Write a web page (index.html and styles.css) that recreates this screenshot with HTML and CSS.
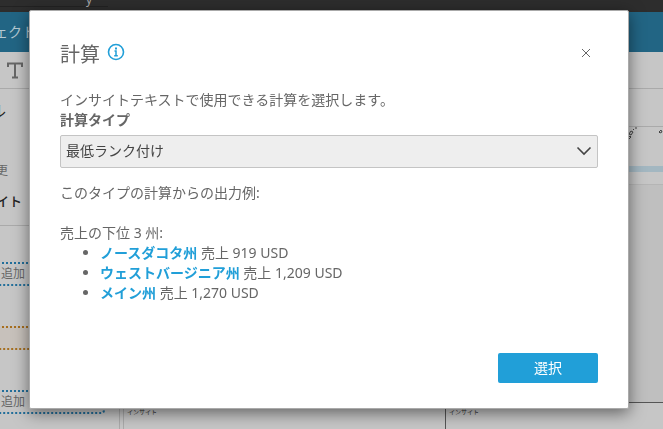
FILE: index.html
```html
<!DOCTYPE html>
<html lang="ja">
<head>
    <meta charset="UTF-8">
    <meta name="viewport" content="width=device-width, initial-scale=1.0">
    <title>計算</title>
    <link rel="stylesheet" href="styles.css">
</head>
<body>
    <div class="app">
        <div class="browser-bar"><span class="tab">y</span></div>
        <div class="nav">ェクト</div>
        <div class="toolbar">
            <svg width="16" height="17" viewBox="0 0 16 17" fill="none" stroke="#666" stroke-width="2">
                <path d="M1 5V1.500H15V5M8 1.500V15.500M5 15.500H11"/>
            </svg>
        </div>
        <div class="workspace">
            <div class="sidebar">
                <div class="sidebar-head">
                    <div class="title">ル</div>
                    <div class="change">更</div>
                    <div class="subtitle">イト</div>
                </div>
                <div class="wells">
                    <div class="well">追加</div>
                    <div class="well orange"></div>
                    <div class="well">追加</div>
                </div>
            </div>
            <div class="canvas">
                <div class="chart-head"></div>
                <div class="chart">
                    <svg width="40" height="14" viewBox="0 0 40 14" fill="none" stroke="#444" stroke-width="1">
                        <path d="M5 11l2-2 1 1-2 2zM6 7l2-3 2 1-2 3zM10 3l1-1M12 1h2M36 5l2-2 1 2-2 1z"/>
                    </svg>
                    <div class="scroll"></div>
                </div>
                <div class="space"></div>
                <div class="cards">
                    <div class="card">インサイト</div>
                    <div class="card active">インサイト</div>
                </div>
            </div>
        </div>
    </div>

    <div class="overlay">
        <div class="modal" role="dialog" aria-labelledby="modalTitle">
            <div class="modal-header">
                <h1 id="modalTitle">計算</h1>
                <button class="info" aria-label="情報">
                    <svg width="18" height="18" viewBox="0 0 18 18" fill="none" stroke="#219fd8">
                        <circle cx="9" cy="9" r="7.500" stroke-width="1.600"/>
                        <path d="M9 4.500v2" stroke-width="2"/>
                        <path d="M7.500 8H9v4.500M7.200 12.700h3.600" stroke-width="1.500"/>
                    </svg>
                </button>
                <button class="close" aria-label="閉じる">
                    <svg width="10" height="10" viewBox="0 0 10 10" stroke="#666" stroke-width="1">
                        <path d="M1 1l8 8M9 1L1 9"/>
                    </svg>
                </button>
            </div>
            <p>インサイトテキストで使用できる計算を選択します。</p>
            <label for="calcType">計算タイプ</label>
            <div class="select-box">
                <select id="calcType">
                    <option>最低ランク付け</option>
                </select>
                <svg width="16" height="10" viewBox="0 0 16 10" fill="none" stroke="#444" stroke-width="1.600">
                    <path d="M1.500 1.500L8 8l6.500-6.500"/>
                </svg>
            </div>
            <p class="example">このタイプの計算からの出力例:</p>
            <p>売上の下位 3 州:</p>
            <ul>
                <li><strong>ノースダコタ州</strong> 売上 919 USD</li>
                <li><strong>ウェストバージニア州</strong> 売上 1,209 USD</li>
                <li><strong>メイン州</strong> 売上 1,270 USD</li>
            </ul>
            <div class="modal-footer">
                <button class="primary">選択</button>
            </div>
        </div>
    </div>
</body>
</html>
```

FILE: styles.css
```css
* {
    box-sizing: border-box;
}
body {
    margin: 0;
    overflow: hidden;
    font-family: "Noto Sans", "Noto Sans CJK JP", sans-serif;
    font-size: 14px;
    line-height: 20px;
    color: #666;
}
h1, p, ul {
    margin: 0;
}
svg {
    display: block;
}

/* page behind the dialog */
.app {
    display: flex;
    flex-direction: column;
    min-height: 100vh;
    margin-left: -10px;
    background-color: #c6c6c6;
}
.browser-bar {
    height: 12px;
    background-color: #2d2d2d;
}
.tab {
    display: block;
    width: 118px;
    height: 7px;
    padding-right: 16px;
    border-bottom: 1px solid #222;
    color: #aaa;
    font-size: 12px;
    line-height: 0;
    text-align: right;
}
.nav {
    padding: 10px 4px;
    background-color: #226584;
    color: #b5c9d2;
}
.toolbar {
    height: 37px;
    padding: 10px 17px;
    border-bottom: 1px solid #aaa;
}
.workspace {
    display: flex;
    flex: 1;
}
.sidebar {
    width: 130px;
    border-right: 1px solid #aaa;
}
.sidebar-head {
    height: 137px;
    padding-top: 12px;
    border-bottom: 1px solid #aaa;
    color: #222;
}
.title {
    font-size: 16px;
}
.change {
    padding: 40px 6px 10px;
    color: #666;
    font-size: 12px;
}
.subtitle {
    padding: 0 6px;
    font-size: 13px;
    font-weight: 500;
}
.wells {
    display: flex;
    flex-direction: column;
    gap: 40px;
    padding: 36px 14px 0 0;
}
.well {
    height: 24px;
    padding-left: 9px;
    border: 2px dotted #226f9b;
    border-radius: 4px;
    font-size: 12px;
    color: #666;
}
.orange {
    border-color: #a66f1f;
    background-color: #c7c1bb;
}
.canvas {
    display: flex;
    flex-direction: column;
    flex: 1;
    margin-left: 3px;
    border-left: 1px solid #aaa;
}
.chart-head {
    height: 38px;
    border-bottom: 1px solid #aaa;
}
.chart {
    display: flex;
    flex-direction: column;
    align-items: flex-end;
    justify-content: space-between;
    height: 58px;
    padding-bottom: 12px;
    border-bottom: 1px solid #b5b5b5;
}
.scroll {
    width: 100%;
    height: 6px;
    background-color: #a3b7c1;
}
.space {
    height: 217px;
    background-color: #bfbfbf;
}
.cards {
    display: grid;
    grid-template-columns: 321px 1fr;
    flex: 1;
}
.card {
    padding: 0 3px;
    border-top: 1px solid #aaa;
    font-size: 6px;
    line-height: 18px;
    color: #333;
}
.active {
    border-top-color: #555;
    border-left: 1px solid #555;
}

/* dialog */
.overlay {
    position: fixed;
    inset: 0;
    padding: 10px 34px 20px 29px;
}
.modal {
    padding: 28px 30px 25px;
    border: 1px solid #aaa;
    border-radius: 2px;
    background-color: #fff;
    box-shadow: 0 4px 16px rgba(0, 0, 0, 0.5);
}
.modal-header {
    display: flex;
    align-items: center;
    margin-bottom: 21px;
}
h1 {
    padding-top: 2px;
    font-size: 20px;
    font-weight: 400;
    line-height: 28px;
}
button {
    border: 0;
    font-family: inherit;
    font-size: 14px;
    cursor: pointer;
}
.info, .close {
    padding: 0;
    background: none;
}
.info {
    margin: 0 auto 4px 7px;
}
.close {
    padding: 0 7px 2px;
}
label {
    display: block;
    font-weight: bold;
}
.select-box {
    position: relative;
    margin: 5px 0 15px;
}
select {
    appearance: none;
    display: block;
    width: 100%;
    height: 33px;
    padding: 0 5px 2px;
    border: 1px solid #c4c4c4;
    border-radius: 2px;
    background-color: #eee;
    color: #444;
    font-family: inherit;
    font-size: 14px;
}
.select-box svg {
    position: absolute;
    top: 11px;
    right: 6px;
    pointer-events: none;
}
.example {
    margin-bottom: 20px;
}
ul {
    padding-left: 40px;
}
strong {
    color: #219fd8;
}
.modal-footer {
    display: flex;
    justify-content: flex-end;
    margin-top: 50px;
}
.primary {
    width: 100px;
    height: 30px;
    padding: 0 0 2px;
    border-radius: 2px;
    background-color: #219fd8;
    color: #fff;
}
```
